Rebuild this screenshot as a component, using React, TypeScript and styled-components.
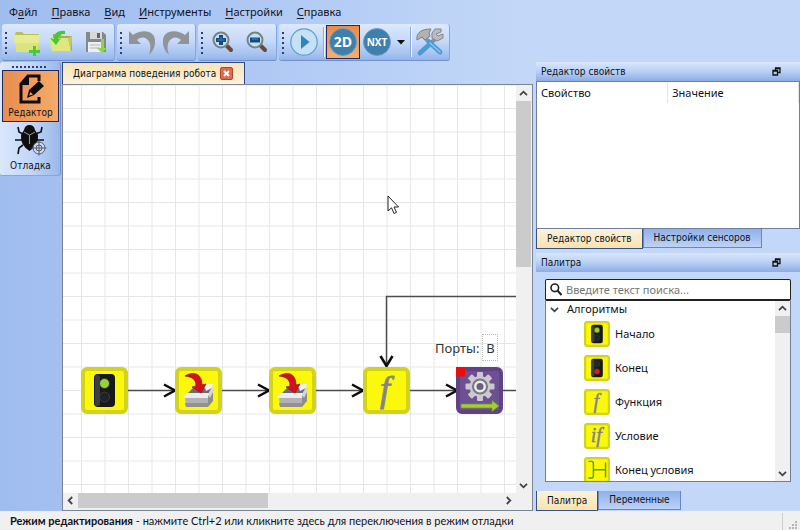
import React from "react";
import styled, { createGlobalStyle, css } from "styled-components";

const uiFont = `"Noto Sans", "Open Sans", sans-serif`;
const captionFont = `"DejaVu Sans Condensed", "DejaVu Sans", sans-serif`;
const statusFont = `Lato, "Noto Sans", sans-serif`;

const Global = createGlobalStyle`
  *, *::before, *::after { box-sizing: border-box; }
  body { margin: 0; }
  button, input { font: inherit; color: inherit; margin: 0; padding: 0; border: 0; background: none; }
  svg { display: block; flex: none; }
`;

const Page = styled.div`
  display: flex;
  flex-direction: column;
  height: 100vh;
  color: #10131a;
  font: 11px/16px ${uiFont};
  background: linear-gradient(90deg, #a0bdf0 0, #a6c2f2 140px, #c3d8f8 520px, #c3d8f8 100%);
`;

/* Menu */
const MenuBar = styled.nav`
  display: flex;
  flex: none;
  height: 24px;
  padding-left: 2px;
`;
const MenuItem = styled.button`
  padding: 0 7px;
  white-space: nowrap;
`;
const Mnemonic = styled.u`
  text-underline-offset: 2px;
`;

/* Toolbars */
const ToolbarRow = styled.div`
  display: flex;
  flex: none;
  gap: 2px;
  height: 38px;
  padding-left: 2px;
`;
const Toolbar = styled.div`
  display: flex;
  align-items: center;
  height: 37px;
  padding: 0 2px 0 8px;
  border-radius: 3px;
  border-bottom: 1px solid #6f90cb;
  border-right: 1px solid #86a6dc;
  position: relative;
  background: linear-gradient(#dce8fc 0, #c7dafa 45%, #a9c5f2 80%, #94b4e8 100%);
  &::before {
    content: "";
    position: absolute;
    left: 3px;
    top: 8px;
    width: 2px;
    height: 22px;
    background: repeating-linear-gradient(#27407a 0 2px, transparent 2px 5px);
  }
`;
const ToolButton = styled.button<{ $on?: boolean }>`
  display: grid;
  place-items: center;
  width: 34px;
  height: 34px;
  ${(p) => p.$on && css`
    border: 1px solid #1f2a63;
    background: linear-gradient(#e78c4c, #f7ae70);
  `}
`;
const DropButton = styled.button`
  display: grid;
  place-items: center;
  width: 14px;
  height: 34px;
`;
const Divider = styled.span`
  width: 2px;
  height: 30px;
  margin: 0 1px 0 2px;
  border-left: 1px solid #8fabda;
  border-right: 1px solid #eef5ff;
`;

/* Work area */
const Work = styled.div`
  display: flex;
  flex: 1;
  min-height: 0;
`;
const ModeColumn = styled.aside`
  flex: none;
  width: 62px;
`;
const ModePanel = styled.div`
  display: flex;
  flex-direction: column;
  width: 61px;
  padding: 8px 1px 1px 2px;
  border-radius: 3px;
  border-right: 1px solid #7394d0;
  border-bottom: 1px solid #86a6dc;
  background:
    repeating-linear-gradient(90deg, #27407a 0 2px, transparent 2px 4px) 12px 4px / 36px 2px no-repeat,
    linear-gradient(90deg, #dae8fd, #c3d7f9 50%, #9ab8ea);
`;
const ModeButton = styled.button<{ $on?: boolean }>`
  display: flex;
  flex-direction: column;
  align-items: center;
  justify-content: flex-end;
  height: 52px;
  font: 10px/16px ${captionFont};
  ${(p) => p.$on && css`
    border: 1px solid #1f2a63;
    background: linear-gradient(90deg, #e88d4f, #f6ab69);
  `}
`;
const Center = styled.main`
  display: flex;
  flex-direction: column;
  flex: 1;
  min-width: 0;
`;
const DocTabs = styled.div`
  display: flex;
  flex: none;
  height: 22px;
`;
const DocTab = styled.div`
  display: flex;
  align-items: center;
  gap: 4px;
  padding: 0 11px 0 10px;
  border: 1px solid #2b4788;
  border-bottom: 0;
  background: linear-gradient(#f8e3b8, #fdf3da);
`;
const DocTitle = styled.button`
  font: 10px/16px ${captionFont};
  white-space: nowrap;
`;
const CloseButton = styled.button`
  display: grid;
  place-items: center;
  width: 13px;
  height: 13px;
  border: 1px solid #b3452b;
  border-radius: 2px;
  background: #df6b50;
`;
const Editor = styled.section`
  display: grid;
  grid-template: minmax(0, 1fr) 15px / minmax(0, 1fr) 15px;
  flex: 1;
  min-height: 0;
  margin-right: 3px;
  padding: 1px 1px 2px 0;
  border: 1px solid #7a8698;
  background: #f0f0f0;
`;
const Scene = styled.div`
  position: relative;
  overflow: hidden;
  background: #fff;
`;
const Edges = styled.svg`
  position: absolute;
  inset: 0;
  width: 100%;
  height: 100%;
`;
const Node = styled.div<{ $x: number; $y: number }>`
  position: absolute;
  left: ${(p) => p.$x}px;
  top: ${(p) => p.$y}px;
`;
const Port = styled.label`
  display: flex;
  align-items: center;
  gap: 3px;
  color: #333;
  font-size: 13px;
`;
const PortInput = styled.input`
  width: 16px;
  height: 27px;
  border: 1px dotted #b4bcb4;
  text-align: center;
`;

/* Scroll bars */
const Track = styled.div<{ $vertical?: boolean }>`
  display: flex;
  flex-direction: ${(p) => (p.$vertical ? "column" : "row")};
  background: #f0f0f0;
`;
const Arrow = styled.button`
  display: grid;
  place-items: center;
  flex: none;
  width: 15px;
  height: 15px;
`;
const Travel = styled.div<{ $vertical?: boolean }>`
  display: flex;
  flex-direction: ${(p) => (p.$vertical ? "column" : "row")};
  flex: 1;
`;
const Thumb = styled.div<{ $share: number }>`
  flex: 0 0 ${(p) => p.$share}%;
  background: #cbcbcb;
`;

/* Docks */
const Docks = styled.aside`
  display: flex;
  flex-direction: column;
  flex: 0 0 33%;
`;
const DockTitle = styled.header`
  display: flex;
  align-items: center;
  justify-content: space-between;
  flex: none;
  height: 19px;
  padding: 0 19px 0 5px;
  font: 10px/16px ${captionFont};
  background: linear-gradient(#d9e6fb, #b9d0f5 50%, #8cace4);
`;
const Heading = styled.h2`
  margin: 0;
  font: inherit;
`;
const FloatButton = styled.button`
  display: grid;
`;
const PropertyPane = styled.div`
  height: 148px;
  border: 1px solid #6f7f9b;
  background: #fff;
`;
const PropertyTable = styled.table`
  width: 100%;
  border-collapse: collapse;
  table-layout: fixed;
`;
const Column = styled.th`
  height: 21px;
  padding: 0 4px;
  text-align: left;
  font-weight: 400;
  border-right: 1px solid #e3e3e3;
`;
const DockTabs = styled.div`
  display: flex;
  flex: none;
  height: 20px;
`;
const DockTab = styled.button<{ $on?: boolean }>`
  height: ${(p) => (p.$on ? 20 : 19)}px;
  padding: 0 10px;
  white-space: nowrap;
  font: 10px/16px ${captionFont};
  border: 1px solid #6487cc;
  border-top: 0;
  background: linear-gradient(#8fb0e9, #bdd3f7);
  ${(p) => p.$on && css`
    border-color: #33507f;
    background: linear-gradient(#fdf3da, #f9e2b0);
  `}
`;
const PaletteDock = styled.section`
  display: flex;
  flex-direction: column;
  flex: 1;
  min-height: 0;
  margin-top: 4px;
`;
const Palette = styled.div`
  display: flex;
  flex-direction: column;
  flex: 1;
  min-height: 0;
  padding: 7px 9px 9px;
`;
const Search = styled.label`
  display: flex;
  align-items: center;
  gap: 4px;
  flex: none;
  height: 22px;
  padding-left: 4px;
  border: 1px solid #222;
  border-bottom-width: 2px;
  border-radius: 2px;
  background: #fff;
`;
const SearchInput = styled.input`
  flex: 1;
  min-width: 0;
  outline: 0;
  &::placeholder { color: #757575; opacity: 1; }
`;
const Tree = styled.div`
  display: flex;
  flex: 1;
  min-height: 0;
  border: 1px solid #6f7f9b;
  border-top: 0;
  background: #fff;
`;
const TreeBody = styled.div`
  flex: 1;
  overflow: hidden;
`;
const Branch = styled.button`
  display: flex;
  align-items: center;
  gap: 8px;
  height: 16px;
  padding-left: 4px;
`;
const Leaves = styled.ul`
  margin: 0;
  padding: 0 0 0 38px;
  list-style: none;
`;
const Leaf = styled.button`
  display: flex;
  align-items: center;
  gap: 5px;
  height: 34px;
`;
const Status = styled.footer`
  display: flex;
  justify-content: space-between;
  flex: none;
  height: 19px;
  padding-left: 10px;
  background: #f0f0f0;
  font-family: ${statusFont};
`;
const StatusEnd = styled.div`
  display: flex;
  align-items: flex-end;
  width: 18px;
  margin-top: 2px;
  padding-left: 6px;
  border-left: 1px solid #cfcfcf;
`;

/* Drawings */
const Chevron = ({ turn }: { turn: number }) => (
  <svg width="9" height="9" viewBox="0 0 9 9">
    <path d="M1 6.2 4.5 2.7 8 6.2" fill="none" stroke="#444" strokeWidth="1.8" transform={`rotate(${turn} 4.5 4.5)`} />
  </svg>
);

const Tile = ({ size, fill = "#fbf80b", edge = "#d3d31c", children }: {
  size: number; fill?: string; edge?: string; children: React.ReactNode;
}) => (
  <svg width={size} height={size} viewBox="0 0 47 47">
    <rect x="2" y="2" width="43" height="43" rx="4" fill={fill} stroke={edge} strokeWidth="4" />
    {children}
  </svg>
);

const TrafficLight = ({ red }: { red?: boolean }) => (
  <>
    <rect x="13" y="7" width="21" height="33" rx="4" fill="#17191b" />
    <rect x="14" y="8" width="5" height="31" rx="2" fill="#3b3f42" />
    <circle cx="23.5" cy="16.5" r="5" fill={red ? "#25282a" : "#96d62c"} stroke="#333" />
    <circle cx="23.5" cy="30" r="5" fill={red ? "#ee1515" : "#202325"} stroke="#3a3d40" />
  </>
);

const BoxArt = () => (
  <>
    <path d="M12 27 18 21H37L34 28Z" fill="#6c6c70" />
    <path d="M29 17H38L37 21 31 24Z" fill="#f1f1f1" />
    <path d="M33 28 38 21V34L33 40Z" fill="#8d8d90" />
    <path d="M33 27 37 20 39 23 35 31Z" fill="#d5d5d7" />
    <path d="M10 30H33V40H11Z" fill="#b2b2b4" />
    <path d="M10 36H33V40H11Z" fill="#929294" />
    <path d="M8 30 12 26H34L33 31H9Z" fill="#ececec" />
    <path d="M10 9C18 4 27 6 27 18L31 17 26 26 17 20 21 19C21 12 17 10 10 9Z" fill="#d3101f" stroke="#92101a" strokeWidth=".7" />
  </>
);

const Letters = ({ children, size }: { children: string; size: number }) => (
  <text x="22" y="34" textAnchor="middle" fontFamily="Liberation Serif, serif" fontStyle="italic" fontSize={size} fill="#838389" stroke="#838389" strokeWidth=".8">
    {children}
  </text>
);

const GearArt = () => (
  <>
    {[0, 45, 90, 135].map((a) => (
      <rect key={a} x="21" y="5" width="6" height="29" rx="1" fill="#c9c9cf" transform={`rotate(${a} 24 19.5)`} />
    ))}
    <circle cx="24" cy="19.5" r="10.5" fill="#c9c9cf" />
    <circle cx="24" cy="19.5" r="7" fill="#e9e9ee" stroke="#77777f" strokeWidth="2" />
    <circle cx="24" cy="19.5" r="3.5" fill="#696080" />
    <path d="M5 37H36V33.5L43 39 36 44.5V41H5Z" fill="#a2cf32" stroke="#6d9a26" strokeWidth=".7" />
    <rect width="9" height="9.5" fill="#ee0b0b" />
  </>
);

const JoinArt = () => (
  <path d="M8 8H14Q17 8 17 12V33Q17 38 14 38H8M17 23H38M39 10V37" fill="none" stroke="#4c9e1e" strokeWidth="2.5" />
);

const FolderNew = () => (
  <svg width="28" height="28" viewBox="0 0 28 28">
    <path d="M2 6 3 4H9L11 6H26V23H3Z" fill="#b9bf58" />
    <path d="M1 7H27L25 24H3Z" fill="#dde37c" />
    <path d="M1 7H27L26 15H2Z" fill="#e6ec92" />
    <path d="M20 18h3v4h4v3h-4v3h-3v-3h-4v-3h4z" fill="#48cc35" />
  </svg>
);
const FolderOpen = () => (
  <svg width="28" height="28" viewBox="0 0 28 28">
    <path d="M6 6H13L15 8H25V23H6Z" fill="#a6ac50" />
    <path d="M2 10H21L24 23H5Z" fill="#e0e780" />
    <path d="M25 8 24 23 21 10Z" fill="#c6cc68" />
    <path d="M18 3C10 2 7 6 7 11L3 10 9 17 14 10 11 11C11 7 14 6 18 6Z" fill="#41ca36" />
  </svg>
);
const Disk = () => (
  <svg width="28" height="28" viewBox="0 0 28 28">
    <path d="M5 4H22L25 7V24H5Z" fill="#85878a" />
    <rect x="9" y="4" width="12" height="7" fill="#d8d8d8" />
    <rect x="16" y="5" width="3" height="5" fill="#666" />
    <rect x="7" y="14" width="15" height="10" fill="#efefef" />
    <path d="M9 17h10M9 20h10" stroke="#b7b7b7" />
    <path d="M20 11H23V20H26L21 25 16 20H20Z" fill="#8bd746" />
  </svg>
);
const Turn = ({ flip }: { flip?: boolean }) => (
  <svg width="30" height="28" viewBox="0 0 30 28">
    <path d="M2 3 6 7C16 0 29 3 28 14 28 20 25 24 22 27 25 18 23 12 18 10 15 9 12 10 10 12L14 16H2Z" fill="#909499" transform={flip ? "matrix(-1 0 0 1 30 0)" : undefined} />
  </svg>
);
const Magnifier = ({ plus }: { plus?: boolean }) => (
  <svg width="22" height="22" viewBox="0 0 22 22">
    <path d="M14 14 19 19" stroke="#6b4837" strokeWidth="4" strokeLinecap="round" />
    <circle cx="9" cy="9" r="7.5" fill="#bfe3ee" stroke="#7b8084" strokeWidth="2" />
    <path d={plus ? "M7 4h4v3h3v4h-3v3H7v-3H4V7h3z" : "M4 6.500h10v5H4z"} fill="#174a83" />
    <path d={plus ? "M8 7h2M5.500 9h7" : "M6 8h6"} stroke="#2b93cf" />
  </svg>
);
const Play = () => (
  <svg width="28" height="28" viewBox="0 0 28 28">
    <circle cx="14" cy="14" r="13.2" fill="#c4e1f6" stroke="#5e9fc9" strokeWidth="1.2" />
    <path d="M11 7 19.5 14 11 21Z" fill="#3585b4" />
  </svg>
);
const Disc = ({ children, size }: { children: string; size: number }) => (
  <svg width="28" height="28" viewBox="0 0 28 28">
    <circle cx="14" cy="14" r="13.5" fill="#3e7fac" stroke="#6b9fc2" />
    <text x="14" y={size > 11 ? 19 : 17.5} textAnchor="middle" fontFamily="Open Sans, sans-serif" fontWeight="700" fontSize={size} fill="#fff">{children}</text>
  </svg>
);
const Tools = () => (
  <svg width="30" height="30" viewBox="0 0 30 30">
    <path d="M8 9 14 15M22 10 16 16" stroke="#8f9297" strokeWidth="4" />
    <path d="M14 15 25 25M16 16 5 26" stroke="#4a9bd8" strokeWidth="5" strokeLinecap="round" />
    <path d="M15 16 25 25" stroke="#8cc6ee" strokeWidth="1.5" strokeLinecap="round" />
    <path d="M2 13C1 6 6 2 16 2L14 6 15 9 10 13 7 10Z" fill="#b0b2b5" stroke="#7c7f84" />
    <path d="M26 2 20 2 17 6 17 11 22 14 28 11 28 7 23 9 21 7 26 5Z" fill="#babcc0" stroke="#84878c" />
  </svg>
);
const EditArt = () => (
  <svg width="30" height="32" viewBox="0 0 30 32">
    <path d="M23 24V29H5V11L12 3H23V8" fill="none" stroke="#0d0d0d" strokeWidth="3" />
    <path d="M5 12H13V3Z" fill="#0d0d0d" />
    <path d="M11 25 13 17 23 8 28 13 18 22Z" fill="#0d0d0d" />
    <path d="M13 22.500 14.500 19 17 21.500Z" fill="#ef9a5a" />
  </svg>
);
const BugArt = () => (
  <svg width="32" height="34" viewBox="0 0 32 34">
    <path d="M8 10 4 8 3 3M20 10 26 8 27 3M7 16H0M8 21 4 24 3 30M21 16H29" fill="none" stroke="#111" strokeWidth="1.6" />
    <path d="M9 6Q10 1 14.500 1T20 6L23 11Q24 21 14.500 27 5 21 6 11Z" fill="#0e0e0e" />
    <path d="M9 8 14.500 11 20 8M14.500 11V20" fill="none" stroke="#999" />
    <g fill="none" stroke="#555c68">
      <circle cx="24" cy="24" r="6" fill="#c9dafa" /><circle cx="24" cy="24" r="3" />
      <path d="M24 16.500V31.500M16.500 24H31.500" />
    </g>
  </svg>
);
const FloatArt = () => (
  <svg width="9" height="9" viewBox="0 0 9 9">
    <path d="M3.500 3V1H8V5.500H6M1 3.500H5.500V8H1ZM1 4H5.500M3.500 1.500H8" fill="none" stroke="#111" strokeWidth="1.3" />
  </svg>
);

const menus: [string, string, string][] = [
  ["Ф", "а", "йл"], ["", "П", "равка"], ["", "В", "ид"], ["", "И", "нструменты"], ["", "Н", "астройки"], ["", "С", "правка"],
];

const leaves = [
  { name: "Начало", art: <TrafficLight /> },
  { name: "Конец", art: <TrafficLight red /> },
  { name: "Функция", art: <Letters size={36}>f</Letters> },
  { name: "Условие", art: <Letters size={36}>if</Letters> },
  { name: "Конец условия", art: <JoinArt /> },
];

const STEP = 23.5;

const ScrollBar = ({ vertical, start, share }: { vertical?: boolean; start: string; share: number }) => (
  <Track $vertical={vertical}>
    <Arrow aria-label={start}><Chevron turn={vertical ? 0 : 270} /></Arrow>
    <Travel $vertical={vertical}><Thumb $share={share} /></Travel>
    <Arrow aria-label={vertical ? "Вниз" : "Вправо"}><Chevron turn={vertical ? 180 : 90} /></Arrow>
  </Track>
);

const Canvas = () => (
  <Scene>
    <Edges>
      <defs>
        <pattern id="grid" x="18" y="22" width={STEP} height={STEP} patternUnits="userSpaceOnUse">
          <path d={`M.5 0V${STEP}M0 .5H${STEP}`} stroke="#e6e6e9" />
        </pattern>
      </defs>
      <rect width="100%" height="100%" fill="url(#grid)" />
      <g fill="none" stroke="#4a4c50" strokeWidth="1.5">
        <path d="M65 304.500H110M159 304.500H204M253 304.500H298M347 304.500H392M440 304.500H460M460 210.500H323.500V278" />
      </g>
      <g fill="none" stroke="#0c0c0c" strokeWidth="2.5">
        {[112, 206, 300, 394].map((x) => <path key={x} d={`M${x - 11} 298.500 ${x} 304.500 ${x - 11} 310.500`} />)}
        <path d="M317.500 270 323.500 280 329.500 270" />
      </g>
    </Edges>
    <Node $x={18} $y={281}><Tile size={47}><TrafficLight /></Tile></Node>
    <Node $x={112} $y={281}><Tile size={47}><BoxArt /></Tile></Node>
    <Node $x={206} $y={281}><Tile size={47}><BoxArt /></Tile></Node>
    <Node $x={300} $y={281}><Tile size={47}><Letters size={36}>f</Letters></Tile></Node>
    <Node $x={393} $y={281}><Tile size={47} fill="#6d4f92" edge="#5f4383"><GearArt /></Tile></Node>
    <Node $x={372} $y={248}><Port>Порты:<PortInput defaultValue="B" /></Port></Node>
    <Node $x={324} $y={109}>
      <svg width="13" height="20" viewBox="0 0 13 20">
        <path d="M1 1V16L4.500 12.800 7 18.500 9.500 17.300 7 12H11.500Z" fill="#fff" stroke="#222" />
      </svg>
    </Node>
  </Scene>
);

export default function App() {
  return (
    <Page>
      <Global />
      <MenuBar>
        {menus.map(([before, key, after]) => (
          <MenuItem key={key + after}><span>{before}<Mnemonic>{key}</Mnemonic>{after}</span></MenuItem>
        ))}
      </MenuBar>
      <ToolbarRow>
        <Toolbar>
          <ToolButton aria-label="Создать"><FolderNew /></ToolButton>
          <ToolButton aria-label="Открыть"><FolderOpen /></ToolButton>
          <ToolButton aria-label="Сохранить"><Disk /></ToolButton>
        </Toolbar>
        <Toolbar>
          <ToolButton aria-label="Отменить"><Turn /></ToolButton>
          <ToolButton aria-label="Повторить"><Turn flip /></ToolButton>
        </Toolbar>
        <Toolbar>
          <ToolButton aria-label="Увеличить"><Magnifier plus /></ToolButton>
          <ToolButton aria-label="Уменьшить"><Magnifier /></ToolButton>
        </Toolbar>
        <Toolbar>
          <ToolButton aria-label="Запустить"><Play /></ToolButton>
          <Divider />
          <ToolButton $on><Disc size={14}>2D</Disc></ToolButton>
          <ToolButton><Disc size={10}>NXT</Disc></ToolButton>
          <DropButton aria-label="Выбрать робота">
            <svg width="8" height="5" viewBox="0 0 8 5"><path d="M0 0H8L4 4.500Z" fill="#111" /></svg>
          </DropButton>
          <Divider />
          <ToolButton aria-label="Настройки"><Tools /></ToolButton>
        </Toolbar>
      </ToolbarRow>
      <Work>
        <ModeColumn>
          <ModePanel>
            <ModeButton $on><EditArt />Редактор</ModeButton>
            <ModeButton><BugArt />Отладка</ModeButton>
          </ModePanel>
        </ModeColumn>
        <Center>
          <DocTabs>
            <DocTab>
              <DocTitle>Диаграмма поведения робота</DocTitle>
              <CloseButton aria-label="Закрыть">
                <svg width="7" height="7" viewBox="0 0 7 7"><path d="M1 1 6 6M6 1 1 6" stroke="#fff" strokeWidth="1.8" /></svg>
              </CloseButton>
            </DocTab>
          </DocTabs>
          <Editor>
            <Canvas />
            <ScrollBar vertical start="Вверх" share={44} />
            <ScrollBar start="Влево" share={45} />
          </Editor>
        </Center>
        <Docks>
          <DockTitle>
            <Heading>Редактор свойств</Heading>
            <FloatButton aria-label="Открепить"><FloatArt /></FloatButton>
          </DockTitle>
          <PropertyPane>
            <PropertyTable>
              <thead><tr><Column>Свойство</Column><Column>Значение</Column></tr></thead>
            </PropertyTable>
          </PropertyPane>
          <DockTabs>
            <DockTab $on>Редактор свойств</DockTab>
            <DockTab>Настройки сенсоров</DockTab>
          </DockTabs>
          <PaletteDock>
            <DockTitle>
              <Heading>Палитра</Heading>
              <FloatButton aria-label="Открепить"><FloatArt /></FloatButton>
            </DockTitle>
            <Palette>
              <Search>
                <svg width="12" height="13" viewBox="0 0 12 13">
                  <circle cx="4.8" cy="4.8" r="3.8" fill="none" stroke="#222" strokeWidth="1.6" />
                  <path d="M7.500 7.500 11.500 12" stroke="#222" strokeWidth="2" />
                </svg>
                <SearchInput aria-label="Поиск" placeholder="Введите текст поиска..." />
              </Search>
              <Tree>
                <TreeBody>
                  <Branch aria-expanded="true"><Chevron turn={180} />Алгоритмы</Branch>
                  <Leaves>
                    {leaves.map((l) => (
                      <li key={l.name}><Leaf><Tile size={26}>{l.art}</Tile>{l.name}</Leaf></li>
                    ))}
                  </Leaves>
                </TreeBody>
                <ScrollBar vertical start="Вверх" share={11} />
              </Tree>
            </Palette>
            <DockTabs>
              <DockTab $on>Палитра</DockTab>
              <DockTab>Переменные</DockTab>
            </DockTabs>
          </PaletteDock>
        </Docks>
      </Work>
      <Status>
        <button><b>Режим редактирования</b> - нажмите Ctrl+2 или кликните здесь для переключения в режим отладки</button>
        <StatusEnd>
          <svg width="9" height="9" viewBox="0 0 9 9" fill="#b5b5b5">
            <path d="M6 0h2v2H6zM3 3h2v2H3zM6 3h2v2H6zM0 6h2v2H0zM3 6h2v2H3zM6 6h2v2H6z" />
          </svg>
        </StatusEnd>
      </Status>
    </Page>
  );
}
